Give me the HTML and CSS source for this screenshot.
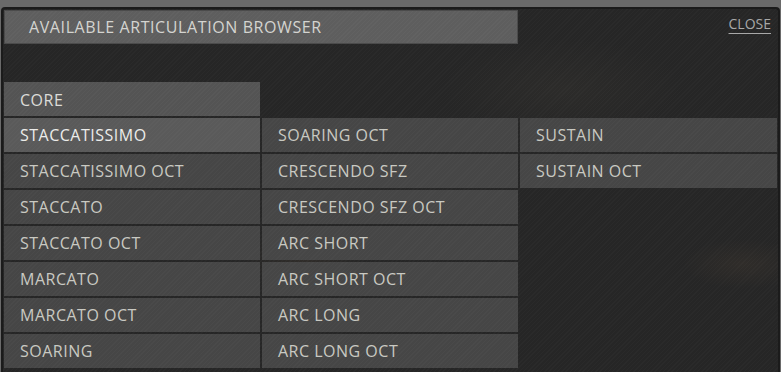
FILE: index.html
```html
<!DOCTYPE html>
<html lang="en">

<head>
    <meta charset="UTF-8">
    <title>Available Articulation Browser</title>
    <link rel="stylesheet" href="styles.css">
</head>

<body>
    <div class="panel">
        <div class="top-row">
            <div class="title-bar">AVAILABLE ARTICULATION BROWSER</div>
            <a class="close" href="#">CLOSE</a>
        </div>
        <div class="tab">CORE</div>
        <div class="grid">
            <div class="cell active">STACCATISSIMO</div>
            <div class="cell">SOARING OCT</div>
            <div class="cell">SUSTAIN</div>
            <div class="cell">STACCATISSIMO OCT</div>
            <div class="cell">CRESCENDO SFZ</div>
            <div class="cell">SUSTAIN OCT</div>
            <div class="cell">STACCATO</div>
            <div class="cell">CRESCENDO SFZ OCT</div>
            <div class="empty"></div>
            <div class="cell">STACCATO OCT</div>
            <div class="cell">ARC SHORT</div>
            <div class="empty"></div>
            <div class="cell">MARCATO</div>
            <div class="cell">ARC SHORT OCT</div>
            <div class="empty"></div>
            <div class="cell">MARCATO OCT</div>
            <div class="cell">ARC LONG</div>
            <div class="empty"></div>
            <div class="cell">SOARING</div>
            <div class="cell">ARC LONG OCT</div>
            <div class="empty"></div>
        </div>
    </div>
</body>

</html>
```

FILE: styles.css
```css
/* Reset */
* {
    margin: 0;
    padding: 0;
    box-sizing: border-box;
}

body {
    font-family: "Open Sans", Arial, sans-serif;
    background-color: #6a6a6a;
    color: #c9c9c2;
    width: 781px;
    height: 372px;
    overflow: hidden;
}

/* Main panel */
.panel {
    margin: 7px 0 0 1px;
    width: 779px;
    height: 366px;
    border: 2px solid #1b1b1b;
    border-bottom: none;
    border-radius: 4px 4px 0 0;
    padding: 1px 0 0 1px;
    background-color: #262626;
    background-image:
        repeating-linear-gradient(135deg, rgba(255, 255, 255, 0.018) 0 1px, transparent 1px 3px),
        radial-gradient(ellipse 60px 30px at 300px 250px, rgba(120, 95, 70, 0.12), transparent),
        radial-gradient(ellipse 60px 25px at 740px 255px, rgba(120, 95, 70, 0.12), transparent),
        radial-gradient(ellipse 120px 50px at 560px 80px, rgba(80, 75, 65, 0.15), transparent);
}

/* Title row */
.top-row {
    display: flex;
    justify-content: space-between;
    align-items: flex-start;
}

.title-bar {
    width: 514px;
    height: 34px;
    padding: 5px 0 0 24px;
    background-color: #5e5e5e;
    background-image: repeating-linear-gradient(135deg, rgba(255, 255, 255, 0.025) 0 1px, transparent 1px 3px);
    border: 1px solid #4b4b4b;
    font-size: 16px;
    letter-spacing: 0.6px;
    color: #d4d4d0;
}

.close {
    margin: 4px 7px 0 0;
    font-size: 14px;
    color: #a8a8a8;
    text-decoration: underline;
    text-underline-offset: 4px;
    text-decoration-thickness: 1px;
}

/* Category tab */
.tab {
    margin-top: 38px;
    width: 256px;
    height: 34px;
    padding: 7px 0 0 16px;
    background-color: #545454;
    background-image: repeating-linear-gradient(135deg, rgba(255, 255, 255, 0.025) 0 1px, transparent 1px 3px);
    font-size: 16px;
    letter-spacing: 0.5px;
    color: #dcdcd8;
}

/* Articulation grid */
.grid {
    margin-top: 2px;
    display: grid;
    grid-template-columns: 256px 256px 257px;
    grid-auto-rows: 34px;
    gap: 2px;
}

.cell {
    padding: 6px 0 0 16px;
    background-color: #464646;
    background-image: repeating-linear-gradient(135deg, rgba(255, 255, 255, 0.02) 0 1px, transparent 1px 3px);
    font-size: 16px;
    letter-spacing: 0.5px;
}

.cell.active {
    background-color: #5a5a5a;
    color: #ececea;
}
```
